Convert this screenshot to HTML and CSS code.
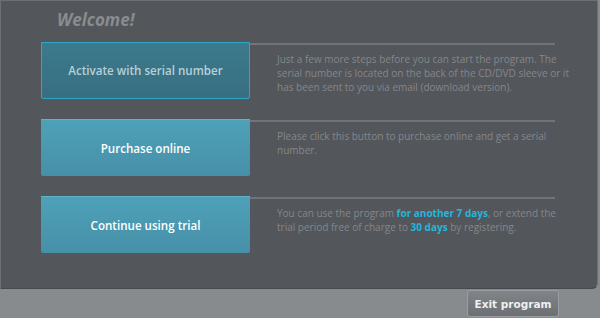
FILE: index.html
```html
<!DOCTYPE html>
<html lang="en">
<head>
    <meta charset="UTF-8">
    <title>Welcome</title>
    <link rel="stylesheet" href="styles.css">
</head>
<body>
    <div class="panel">
        <h1 class="welcome">Welcome!</h1>

        <div class="option-list">
            <div class="option">
                <button class="option-button active">Activate with serial number</button>
                <div class="option-info">
                    Just a few more steps before you can start the program. The<br>
                    serial number is located on the back of the CD/DVD sleeve or it<br>
                    has been sent to you via email (download version).
                </div>
            </div>

            <div class="option">
                <button class="option-button">Purchase online</button>
                <div class="option-info">
                    Please click this button to purchase online and get a serial<br>
                    number.
                </div>
            </div>

            <div class="option">
                <button class="option-button">Continue using trial</button>
                <div class="option-info">
                    You can use the program <span class="highlight">for another 7 days</span>, or extend the<br>
                    trial period free of charge to <span class="highlight">30 days</span> by registering.
                </div>
            </div>
        </div>
    </div>

    <div class="footer">
        <button class="exit-button">Exit program</button>
    </div>
</body>
</html>
```

FILE: styles.css
```css
* {
    margin: 0;
    padding: 0;
    box-sizing: border-box;
    font-family: 'Open Sans', 'DejaVu Sans', sans-serif;
}

body {
    width: 600px;
    height: 318px;
    background: #888b8e;
    overflow: hidden;
}

.panel {
    width: 598px;
    height: 289px;
    background: #53565b;
    border: 1px solid #6c6f73;
    border-bottom-color: #45484c;
    border-radius: 0 0 6px 0;
    padding: 7px 0 0 40px;
}

.welcome {
    font-size: 17px;
    font-weight: 700;
    font-style: italic;
    color: #898c90;
    line-height: 24px;
    padding-left: 16px;
    margin-bottom: 10px;
}

.option-list {
    display: flex;
    flex-direction: column;
    gap: 20px;
}

.option {
    display: flex;
}

.option-button {
    width: 209px;
    height: 57px;
    flex-shrink: 0;
    border: none;
    border-radius: 0 0 2px 2px;
    background: linear-gradient(180deg, #4ea1b9 0%, #4690a8 100%);
    border-top: 1px solid #5fb2c8;
    color: #ffffff;
    font-size: 11.6px;
    font-weight: 600;
    cursor: pointer;
}

.option-button.active {
    background: linear-gradient(180deg, #3c7a8c 0%, #376f81 100%);
    border: 1px solid #2fa6c7;
    color: #b9cfd6;
}

.option-info {
    width: 305px;
    border-top: 2px solid #707377;
    margin-top: 1px;
    padding: 7px 0 0 27px;
    font-size: 10px;
    line-height: 14px;
    white-space: nowrap;
    color: #84878b;
}

.highlight {
    color: #23b7de;
    font-weight: 700;
}

.footer {
    display: flex;
    justify-content: flex-end;
    padding: 1px 41px 0 0;
}

.exit-button {
    width: 92px;
    height: 27px;
    background: linear-gradient(180deg, #818488 0%, #6c6f73 100%);
    border: 1px solid #9a9da0;
    border-radius: 3px;
    color: #eef0f1;
    font-family: 'DejaVu Sans', sans-serif;
    font-size: 10.5px;
    font-weight: 700;
    cursor: pointer;
}
```
